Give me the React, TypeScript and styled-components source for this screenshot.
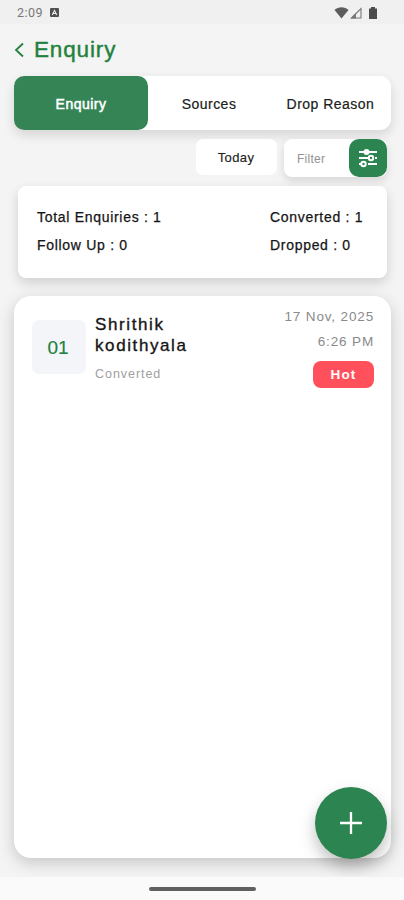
import React from "react";
import styled, { createGlobalStyle } from "styled-components";

const Global = createGlobalStyle`
  * { box-sizing: border-box; }
  body { margin: 0; background: #f4f4f4; font-family: "Liberation Sans", Arial, sans-serif; color: #151515; }
  button { font: inherit; border: 0; padding: 0; }
`;

const Screen = styled.div`
  width: 404px;
  height: 900px;
  display: flex;
  flex-direction: column;
  overflow: hidden;
  position: relative;
`;

const StatusBar = styled.div`
  height: 24px;
  flex: none;
  background: #f0f0f0;
  display: flex;
  align-items: center;
  padding: 1px 25px 0 17px;
  color: #777;
  font: 12.5px Roboto, sans-serif;
`;

const Clock = styled.span`
  width: 33px;
  letter-spacing: 0.5px;
`;

const StatusIcons = styled.div`
  margin-left: auto;
  display: flex;
`;

const Header = styled.header`
  height: 52px;
  flex: none;
  display: flex;
  align-items: center;
  padding: 0 0 0 14px;
  color: #22813c;
`;

const Title = styled.h1`
  margin: 0 0 0 9px;
  font-size: 22.5px;
  line-height: 28px;
  font-weight: 400;
  letter-spacing: 0.85px;
  -webkit-text-stroke: 0.4px currentColor;
`;

const Tabs = styled.nav`
  flex: none;
  height: 54px;
  margin: 0 13px 0 14px;
  display: grid;
  grid-template-columns: 134px 122px 1fr;
  background: #fff;
  border-radius: 11px;
  box-shadow: 0 5px 12px rgba(0, 0, 0, 0.13);
`;

const Tab = styled.button<{ $active?: boolean }>`
  border-radius: 10px;
  background: ${(p) => (p.$active ? "#348456" : "transparent")};
  color: ${(p) => (p.$active ? "#fff" : "#202020")};
  font-size: 14px;
  letter-spacing: 0.48px;
  padding-top: 1px;
  -webkit-text-stroke: ${(p) => (p.$active ? "0.5px" : "0.2px")} currentColor;
`;

const Filters = styled.div`
  flex: none;
  height: 38px;
  margin: 9px 17px 0 0;
  display: flex;
  justify-content: flex-end;
  gap: 7px;
`;

const DayButton = styled.button`
  width: 81px;
  height: 36px;
  border-radius: 7px;
  background: #fff;
  color: #222;
  font-size: 13px;
  letter-spacing: 0.4px;
  padding: 1px 1px 0 0;
  -webkit-text-stroke: 0.15px currentColor;
`;

const FilterBox = styled.div`
  width: 103px;
  height: 38px;
  display: flex;
  align-items: center;
  justify-content: space-between;
  padding-left: 13px;
  border-radius: 8px;
  background: #fff;
  box-shadow: 0 4px 9px rgba(0, 0, 0, 0.12);
  color: #929292;
  font-size: 12px;
  letter-spacing: 0.25px;
`;

const FilterLabel = styled.span`
  padding-top: 2px;
`;

const FilterButton = styled.button`
  width: 38px;
  height: 38px;
  border-radius: 10px;
  background: #2c8450;
  display: grid;
  place-items: center;
`;

const Summary = styled.section`
  flex: none;
  height: 92px;
  margin: 9px 17px 0 18px;
  padding: 17px 0 0 19px;
  display: grid;
  grid-template-columns: 233px 1fr;
  grid-auto-rows: 28px;
  background: #fff;
  border-radius: 8px;
  box-shadow: 0 5px 12px rgba(0, 0, 0, 0.15);
  font-size: 14px;
  line-height: 28px;
  letter-spacing: 0.7px;
  white-space: nowrap;
  -webkit-text-stroke: 0.25px currentColor;
`;

const ListPanel = styled.main`
  flex: none;
  height: 562px;
  margin: 18px 13px 0 14px;
  padding: 11px 17px 0 18px;
  background: #fff;
  border-radius: 17px;
  box-shadow: 0 5px 16px rgba(0, 0, 0, 0.19);
`;

const Entry = styled.article`
  display: flex;
`;

const Index = styled.div`
  width: 54px;
  height: 54px;
  margin: 13px 9px 0 0;
  border-radius: 7px;
  background: #f3f5f9;
  color: #22813c;
  display: grid;
  place-items: center;
  font-size: 19px;
  padding: 2px 2px 0 0;
  -webkit-text-stroke: 0.15px currentColor;
`;

const Person = styled.div`
  width: 110px;
  padding-top: 7px;
`;

const Name = styled.div`
  font-size: 17px;
  line-height: 21px;
  letter-spacing: 1.6px;
  -webkit-text-stroke: 0.35px currentColor;
`;

const State = styled.div`
  margin-top: 10px;
  font-size: 12.5px;
  line-height: 16px;
  letter-spacing: 0.95px;
  color: #a0a0a0;
`;

const Meta = styled.div`
  margin-left: auto;
  display: flex;
  flex-direction: column;
  align-items: flex-end;
`;

const Stamp = styled.div`
  height: 25px;
  font-size: 13.5px;
  line-height: 19px;
  letter-spacing: 0.85px;
  color: #8a8a8a;
`;

const Badge = styled.div`
  width: 61px;
  height: 27px;
  margin-top: 4px;
  border-radius: 8px;
  background: #ff505c;
  color: #fff;
  font-size: 13.5px;
  font-weight: 700;
  letter-spacing: 1.2px;
  line-height: 28px;
  text-align: center;
`;

const AddButton = styled.button`
  position: absolute;
  left: 315px;
  top: 787px;
  width: 72px;
  height: 72px;
  border-radius: 50%;
  background: #2c8450;
  display: grid;
  place-items: center;
  box-shadow: 0 8px 16px rgba(0, 0, 0, 0.25);
`;

const NavBar = styled.footer`
  height: 23px;
  margin-top: auto;
  flex: none;
  display: flex;
  justify-content: center;
  padding-top: 10px;
  background: #fafafa;
  z-index: 1;
`;

const HomeHandle = styled.div`
  width: 107px;
  height: 4px;
  border-radius: 2px;
  background: #606060;
`;

export default function App() {
  return (
    <Screen>
      <Global />
      <StatusBar>
        <Clock>2:09</Clock>
        <svg width="9" height="9" viewBox="0 0 9 9">
          <rect width="9" height="9" rx="1" fill="#505050" />
          <path d="M2.200 7 4.5 2.500 6.800 7M3.1 5.5h2.8" fill="none" stroke="#eee" strokeWidth="1.1" />
        </svg>
        <StatusIcons>
          <svg width="45" height="14" viewBox="0 0 45 14">
            <path d="M0.5 4C4.5 .4 10.5 .4 14.5 4L7.5 12.5Z" fill="#5c5c5c" />
            <path d="M17.5 12 27 2.5V12Z" fill="none" stroke="#777" strokeWidth="1.1" />
            <path d="M16.5 12.5 22 7V12.5Z" fill="#777" />
            <path d="M35 2.5h2V1h4v1.500h2V13h-8Z" fill="#4c4c4c" />
          </svg>
        </StatusIcons>
      </StatusBar>
      <Header>
        <svg width="11" height="16" viewBox="0 0 11 16" fill="none" stroke="currentColor" strokeWidth="1.8">
          <path d="M9 1.500 2 8l7 6.500" />
        </svg>
        <Title>Enquiry</Title>
      </Header>
      <Tabs>
        <Tab $active>Enquiry</Tab>
        <Tab>Sources</Tab>
        <Tab>Drop Reason</Tab>
      </Tabs>
      <Filters>
        <DayButton>Today</DayButton>
        <FilterBox>
          <FilterLabel>Filter</FilterLabel>
          <FilterButton aria-label="Filter options">
            <svg width="20" height="20" viewBox="0 0 20 20" fill="none" stroke="#fff" strokeWidth="2">
              <path d="M1 4h5M11 4h8M1 10h9M17 10h2M10 16h9M1 16h2" />
              <circle cx="8.500" cy="4" r="2" fill="#fff" />
              <circle cx="13" cy="10" r="2.200" />
              <circle cx="5.500" cy="16" r="2.200" />
            </svg>
          </FilterButton>
        </FilterBox>
      </Filters>
      <Summary>
        <span>Total Enquiries : 1</span>
        <span>Converted : 1</span>
        <span>Follow Up : 0</span>
        <span>Dropped : 0</span>
      </Summary>
      <ListPanel>
        <Entry>
          <Index>01</Index>
          <Person>
            <Name>Shrithik kodithyala</Name>
            <State>Converted</State>
          </Person>
          <Meta>
            <Stamp>17 Nov, 2025</Stamp>
            <Stamp>6:26 PM</Stamp>
            <Badge>Hot</Badge>
          </Meta>
        </Entry>
      </ListPanel>
      <AddButton aria-label="Add enquiry">
        <svg width="24" height="24" viewBox="0 0 24 24" stroke="#fff" strokeWidth="2.300">
          <path d="M12 1v22M1 12h22" />
        </svg>
      </AddButton>
      <NavBar>
        <HomeHandle />
      </NavBar>
    </Screen>
  );
}
